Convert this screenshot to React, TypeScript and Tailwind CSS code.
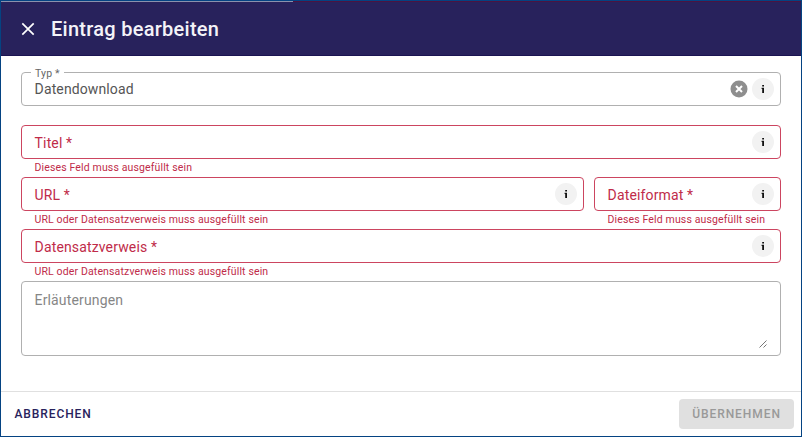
import type { ReactNode } from 'react';

function InfoButton() {
  return (
    <button
      type="button"
      aria-label="Info"
      className="flex size-[22px] shrink-0 items-center justify-center rounded-full bg-[#f2f2f2]"
    >
      <svg width="4" height="8" viewBox="0 0 4 8" fill="#111">
        <path d="M1.2 0h1.8v1.5H1.2zM0.6 2.8H3V8H1.2V4H0.6z" />
      </svg>
    </button>
  );
}

function ErrorField({ label, hint, className }: { label: string; hint: string; className: string }) {
  return (
    <div className={`flex h-[52px] flex-col text-[#c02b49] ${className}`}>
      <div className="flex h-[34px] items-center justify-between rounded border border-[#cc4560] pr-[6px] pl-[12.6px]">
        <span className="pt-[2px] text-[14px] leading-4 tracking-[0.14px]">{label}</span>
        <InfoButton />
      </div>
      <p className="pt-[2px] pl-[13.5px] text-[10.5px] leading-[14px] tracking-[0.14px] whitespace-nowrap">{hint}</p>
    </div>
  );
}

function Header({ children }: { children: ReactNode }) {
  return (
    <header className="flex h-[55px] shrink-0 flex-col border-b border-[#1b1452] bg-[#28225c]">
      <div className="flex h-px">
        <div className="w-[292px] bg-[#8b91ac]" />
        <div className="grow bg-[#4b1441]" />
      </div>
      <div className="flex grow items-center pl-[20px]">
        <svg width="14" height="14" viewBox="0 0 14 14" fill="none" stroke="#fff" strokeWidth="1.7">
          <path d="M1.3 1.3l11.4 11.4M12.7 1.3L1.3 12.7" />
        </svg>
        <h1 className="pl-[16px] text-[20px] leading-6 font-medium tracking-[0.27px] text-[#f4f3f8]">{children}</h1>
      </div>
    </header>
  );
}

export default function App() {
  return (
    <div className="flex h-[437px] w-[802px] flex-col border border-[#044382] bg-white font-['Roboto','Liberation_Sans',sans-serif]">
      <Header>Eintrag bearbeiten</Header>
      <main className="flex grow flex-col px-[20px] pt-[16px]">
        <div className="relative flex h-[34px] items-center rounded border border-[#b0b0b0] pr-[6px] pl-[12.6px]">
          <span className="absolute -top-[6px] left-[9px] bg-white px-[4px] text-[10.5px] leading-[14px] tracking-[0.14px] text-[#666]">
            Typ *
          </span>
          <span className="grow text-[14px] leading-4 tracking-[0.12px] text-[#555]">Datendownload</span>
          <svg className="mr-[4px]" width="18" height="18" viewBox="0 0 18 18">
            <circle cx="9" cy="9" r="8.5" fill="#8e8e8e" />
            <path d="M6 6l6 6M12 6l-6 6" stroke="#fff" strokeWidth="2" />
          </svg>
          <InfoButton />
        </div>
        <div className="flex flex-col pt-[19px]">
          <ErrorField className="w-full" label="Titel *" hint="Dieses Feld muss ausgefüllt sein" />
          <div className="flex gap-[10px]">
            <ErrorField className="w-[563px]" label="URL *" hint="URL oder Datensatzverweis muss ausgefüllt sein" />
            <ErrorField className="w-[187px]" label="Dateiformat *" hint="Dieses Feld muss ausgefüllt sein" />
          </div>
          <ErrorField
            className="w-full"
            label="Datensatzverweis *"
            hint="URL oder Datensatzverweis muss ausgefüllt sein"
          />
        </div>
        <div className="flex h-[75px] items-start justify-between rounded border border-[#b0b0b0] pt-[10px] pr-[13px] pl-[12.6px]">
          <span className="text-[14px] leading-4 tracking-[0.14px] text-[#868686]">Erläuterungen</span>
          <svg className="mt-[48px]" width="8" height="8" viewBox="0 0 8 8" stroke="#777" strokeWidth="1">
            <path d="M0.5 7.5l7-7M4.5 7.5l3-3" />
          </svg>
        </div>
      </main>
      <footer className="flex h-[45px] shrink-0 items-center justify-between border-t border-[#e0e0e0] pr-[7px] pl-[13.5px]">
        <button type="button" className="text-[12px] font-medium tracking-[0.9px] text-[#28225c]">
          ABBRECHEN
        </button>
        <button
          type="button"
          disabled
          className="h-[30px] w-[115px] rounded bg-[#e0e0e0] text-[12px] font-medium tracking-[0.93px] text-[#999]"
        >
          ÜBERNEHMEN
        </button>
      </footer>
    </div>
  );
}
